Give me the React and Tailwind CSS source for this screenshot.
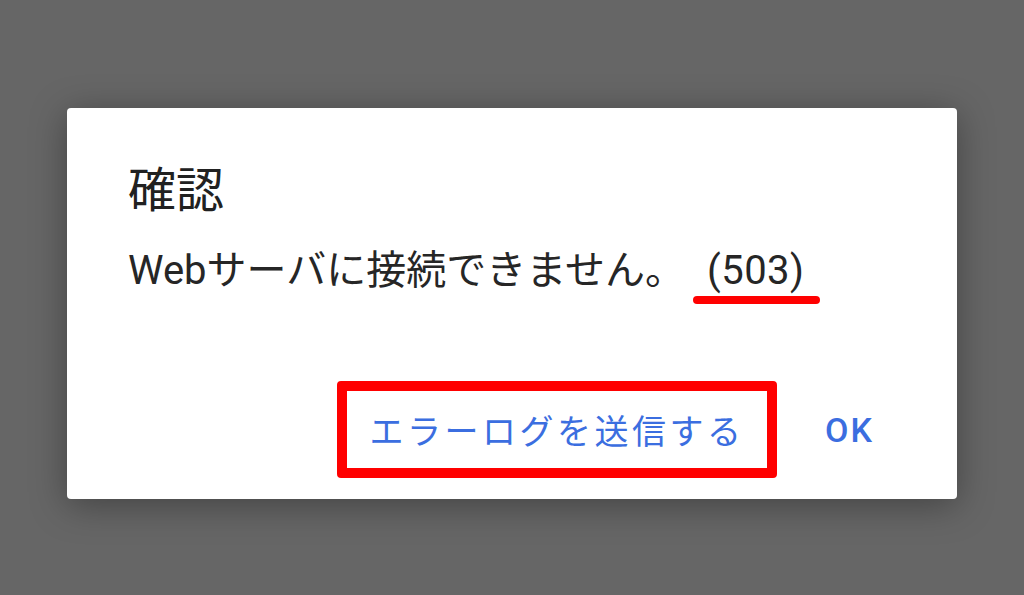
const ErrorDialog = () => {
  return (
    <div className="flex flex-col w-[890px] h-[391px] ml-[67px] bg-white rounded-[4px] shadow-[0_6px_36px_rgba(0,0,0,0.35)]">
      <h2 className="pl-[61px] pt-[54px] text-[48px] leading-none text-[#212121] font-normal">確認</h2>
      <p className="pl-[61px] mt-[41px] text-[40px] leading-none text-[#262626] font-['Roboto','Noto_Sans_CJK_JP',sans-serif]">
        Webサーバに接続できません。
        <span className="relative ml-[22px] tracking-[0.5px]">
          (503)
          <span className="absolute -left-[14px] -right-[15px] -bottom-[10px] h-[8px] rounded-full bg-[#ff0000]"></span>
        </span>
      </p>
      <div className="mt-auto pb-[21px] pr-[83px] flex items-center justify-end">
        <button className="w-[440px] h-[97px] border-[10px] border-[#ff0000] rounded-[4px] flex items-center justify-center text-[34px] leading-none tracking-[3.5px] text-[#3b6ee0]">
          エラーログを送信する
        </button>
        <button className="ml-[48px] text-[34px] leading-none font-medium tracking-[2px] text-[#3b6ee0] font-['Roboto',sans-serif]">
          OK
        </button>
      </div>
    </div>
  );
};

export default function App() {
  return (
    <div className="w-[1024px] h-[595px] pt-[108px] bg-[#666666] overflow-hidden font-['Noto_Sans_CJK_JP',sans-serif]">
      <ErrorDialog />
    </div>
  );
}
